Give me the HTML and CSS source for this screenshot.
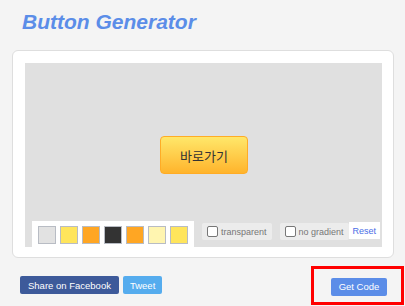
FILE: index.html
```html
<!DOCTYPE html>
<html lang="ko">
<head>
    <meta charset="UTF-8">
    <meta name="viewport" content="width=device-width, initial-scale=1.0">
    <title>Button Generator</title>
    <link rel="stylesheet" href="styles.css">
</head>
<body>

    <h1 class="title">Button Generator</h1>

    <div class="card">
        <div class="stage">
            <button class="preview-btn">바로가기</button>

            <div class="toolbar">
                <div class="swatches">
                    <span class="swatch" style="background:#e2e2e2"></span>
                    <span class="swatch" style="background:#ffe55c"></span>
                    <span class="swatch" style="background:#ffa623"></span>
                    <span class="swatch" style="background:#333333"></span>
                    <span class="swatch" style="background:#ffa623"></span>
                    <span class="swatch" style="background:#fff5b0"></span>
                    <span class="swatch" style="background:#ffe55c"></span>
                </div>
                <label class="option"><span class="check"></span>transparent</label>
                <div class="option-group">
                    <label class="option"><span class="check"></span>no gradient</label>
                    <button class="reset">Reset</button>
                </div>
            </div>
        </div>
    </div>

    <div class="actions">
        <button class="share fb">Share on Facebook</button>
        <button class="share tw">Tweet</button>
        <div class="highlight">
            <button class="share code">Get Code</button>
        </div>
    </div>

</body>
</html>
```

FILE: styles.css
```css
body {
    margin: 0;
    padding: 0 11px 0 12px;
    background: #f4f4f4;
    font-family: "Liberation Sans", Arial, sans-serif;
}
.title {
    margin: 0;
    padding: 10px 0 0 10px;
    height: 50px;
    box-sizing: border-box;
    font-size: 21px;
    line-height: 24px;
    font-style: italic;
    font-weight: bold;
    color: #5b8de8;
}
.card {
    background: white;
    border: 1px solid #dedede;
    border-radius: 6px;
    padding: 12px 11px 10px 12px;
}
.stage {
    display: grid;
    height: 184px;
    background: #e0e0e0;
}
.preview-btn {
    grid-area: 1 / 1;
    place-self: center;
    width: 88px;
    height: 38px;
    padding: 0;
    border: 1px solid #ffac26;
    border-radius: 4px;
    background: linear-gradient(#ffe76a, #ffb42c);
    color: #333;
    font-family: "Noto Sans CJK KR", sans-serif;
    font-size: 13px;
    margin-left: 1px;
}
.toolbar {
    grid-area: 1 / 1;
    align-self: end;
    display: flex;
    align-items: flex-start;
    gap: 8px;
    padding-left: 7px;
}
.swatches {
    display: flex;
    gap: 4px;
    padding: 5px 6px 3px 6px;
    background: white;
}
.swatch {
    width: 16px;
    height: 16px;
    border: 1px solid #b8bcc4;
}
.option-group {
    display: flex;
    margin-top: 1px;
}
.option {
    display: flex;
    align-items: center;
    gap: 3px;
    height: 17px;
    padding: 0 5px;
    margin-top: 2px;
    background: #ececec;
    border-radius: 2px;
    color: #777;
    font-size: 9px;
}
.option-group .option {
    margin-top: 1px;
}
.check {
    width: 9px;
    height: 9px;
    border: 1px solid #777;
    border-radius: 2px;
    background: white;
}
.reset {
    height: 17px;
    padding: 0 4px;
    border: none;
    background: white;
    color: #4a6ee6;
    font-family: inherit;
    font-size: 9px;
}
.actions {
    display: flex;
    align-items: center;
    gap: 4px;
    padding: 8px 0 0 8px;
}
.share {
    height: 18px;
    padding: 0 8px;
    border: none;
    border-radius: 2px;
    color: white;
    font-family: inherit;
    font-size: 9.5px;
}
.fb {
    background: #3d5a9a;
}
.tw {
    background: #55acee;
    padding: 0 7px;
}
.code {
    width: 56px;
    padding: 0;
    background: #5b8de8;
}
.highlight {
    margin-left: auto;
    margin-right: -10px;
    padding: 7px 14px 6px 17px;
    border: 3px solid #ff0000;
}
```
